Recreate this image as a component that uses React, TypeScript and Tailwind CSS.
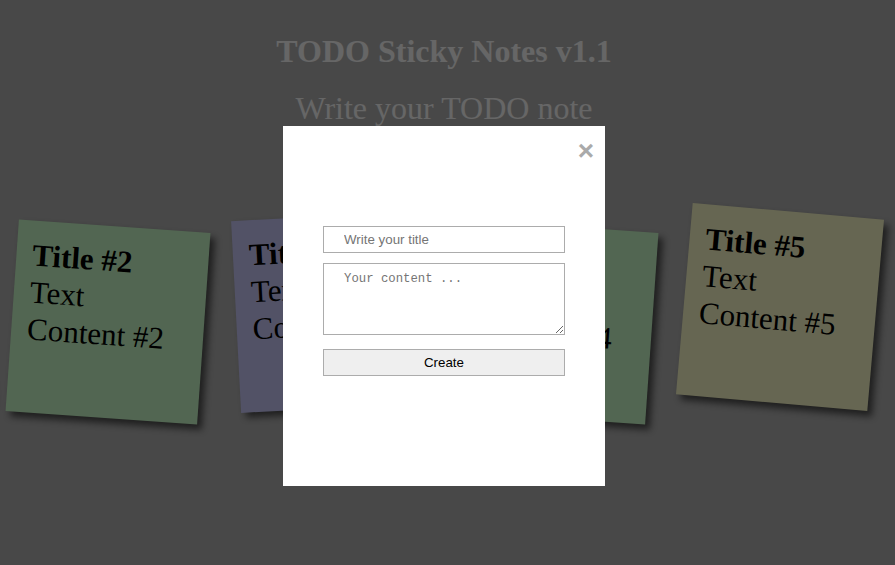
import React from 'react';

type Note = {
  id: number;
  bg: string;
  tilt: string;
  offset: string;
};

// nth-child styling from the original sticky notes sheet
const notes: Note[] = [
  { id: 1, bg: 'bg-[#ffffcc]', tilt: 'rotate-[-6deg]', offset: 'mt-[16px]' },
  { id: 2, bg: 'bg-[#ccffcc]', tilt: 'rotate-[4deg]', offset: 'mt-[21px]' },
  { id: 3, bg: 'bg-[#ccccff]', tilt: 'rotate-[-3deg]', offset: 'mt-[11px]' },
  { id: 4, bg: 'bg-[#ccffcc]', tilt: 'rotate-[4deg]', offset: 'mt-[21px]' },
  { id: 5, bg: 'bg-[#ffffcc]', tilt: 'rotate-[5deg]', offset: 'mt-[6px]' },
  { id: 6, bg: 'bg-[#ccccff]', tilt: 'rotate-[-3deg]', offset: 'mt-[11px]' },
];

function StickyNote({ note }: { note: Note }) {
  return (
    <li className={`mx-[16px] shrink-0 ${note.offset}`}>
      <a
        href="#"
        className={`block h-[192px] w-[192px] p-[16px] text-black shadow-[5px_5px_7px_rgba(33,33,33,0.7)] ${note.bg} ${note.tilt}`}
      >
        <h2 className="text-[31px] font-bold leading-[37px]">Title #{note.id}</h2>
        <p className="text-[31px] leading-[37px]">Text Content #{note.id}</p>
      </a>
    </li>
  );
}

export default function App() {
  return (
    <div className="relative h-[565px] overflow-hidden bg-[#b4b4b4] font-['Liberation_Serif',serif]">
      <h1 className="pr-[7px] pt-[33px] text-center text-[32px] font-bold leading-[37px] text-white">
        TODO Sticky Notes v1.1
      </h1>
      <h2 className="mt-[20px] pr-[7px] text-center text-[32px] leading-[37px] text-white">
        Write your TODO note
      </h2>

      <ul className="mt-[78px] flex items-start justify-center pr-[7px]">
        {notes.map((note) => (
          <StickyNote key={note.id} note={note} />
        ))}
      </ul>

      {/* Modal */}
      <div className="fixed inset-0 flex justify-center bg-black/60 pr-[7px] pt-[126px]">
        <div className="h-[360px] w-[322px] bg-white px-[40px] font-['Liberation_Sans',Arial,sans-serif]">
          <div className="-mr-[29px] flex justify-end pt-[9px]">
            <span className="cursor-pointer text-[28px] font-bold leading-[32px] text-[#aaaaaa]">×</span>
          </div>
          <form className="mt-[59px]">
            <input
              type="text"
              placeholder="Write your title"
              className="block h-[27px] w-full border border-[#acacac] px-[20px] py-[5px] text-[13.333px] leading-[15px] text-black outline-none placeholder:text-[#757575]"
            />
            <textarea
              placeholder="Your content ..."
              className="mt-[10px] block h-[72px] w-full border border-[#acacac] px-[20px] pb-[5px] pt-[8px] font-['Liberation_Mono',monospace] text-[12.3px] leading-[15px] text-black outline-none placeholder:text-[#757575]"
            />
            <button
              type="button"
              className="mt-[14px] block h-[27px] w-full border border-[#acacac] bg-[#efefef] text-[13.333px] text-black"
            >
              Create
            </button>
          </form>
        </div>
      </div>
    </div>
  );
}
